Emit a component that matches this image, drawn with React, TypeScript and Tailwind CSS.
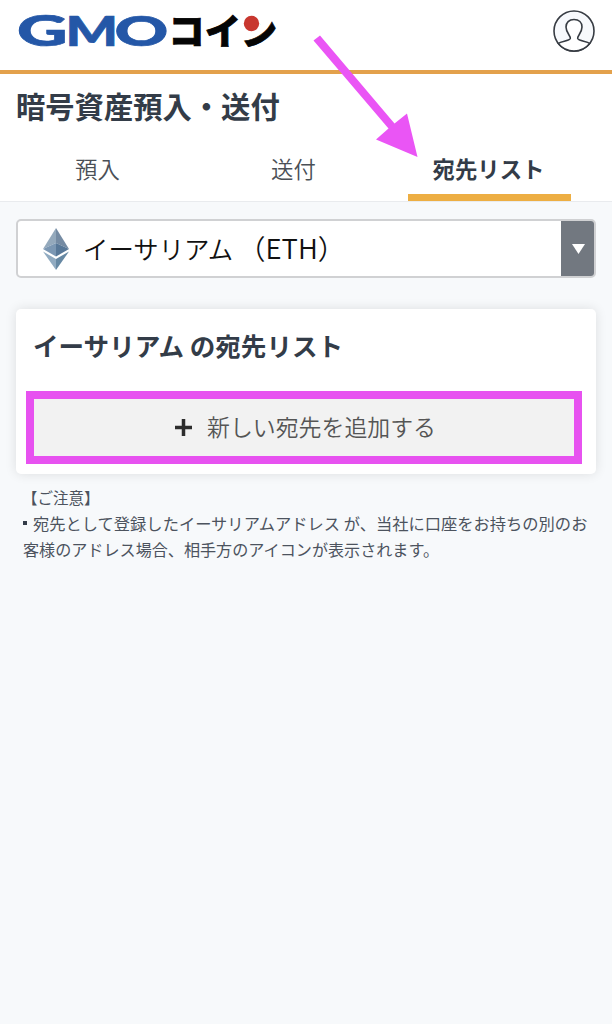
const tabs = [
  { label: "預入", active: false },
  { label: "送付", active: false },
  { label: "宛先リスト", active: true },
];

function Logo() {
  return (
    <svg className="h-[70px] w-[300px]" viewBox="0 0 300 70">
      <g fill="#2457a7" stroke="#2457a7" strokeWidth="0.700" fontSize="41.500" fontWeight="900" fontFamily="Lato, sans-serif">
        <text transform="translate(17 46.300) scale(1.68 1)">G</text>
        <text transform="translate(65.500 46.300) scale(1.33 1)">M</text>
        <text transform="translate(114.500 46.300) scale(1.6 1)">O</text>
      </g>
      <g fill="#050505" stroke="#050505" strokeWidth="0.800" fontSize="36" fontWeight="900" fontFamily="'Noto Sans CJK JP', sans-serif">
        <text x="168.500" y="44.500">コ</text>
        <text x="205" y="44.500">イ</text>
        <text x="241" y="44.500">ン</text>
      </g>
      <path d="M241 13h19v15h-3l-5 5h-11z" fill="#fff" />
      <circle cx="251.500" cy="23.500" r="7.700" fill="#c8372f" />
    </svg>
  );
}

function Avatar() {
  return (
    <svg className="mr-[17px] h-[42px] w-[42px]" viewBox="0 0 42 42" fill="none" stroke="#373c43" strokeWidth="1.6">
      <circle cx="21" cy="21" r="20" fill="#f7f9fc" />
      <path fill="#fff" d="M5.300 33.500C8 31.200 16.500 31 17.300 28.500C18 26 13 23 13 17C13 12.500 16 9.500 21 9.500S29 12.500 29 17C29 23 24 26 24.700 28.500C25.500 31 34 31.200 36.700 33.500A20 20 0 0 1 5.300 33.500Z" />
    </svg>
  );
}

function EthIcon() {
  return (
    <svg className="h-[42px] w-[26px]" viewBox="0 0 26 42">
      <path fill="#94a9bc" d="M13 0 0 21l13-6z" />
      <path fill="#758ba3" d="m13 0 13 21-13-6z" />
      <path fill="#7b97b3" d="m0 21 13-6v13.500z" />
      <path fill="#587898" d="m26 21-13-6v13.500z" />
      <path fill="#91abc1" d="m0 23.500 13 7.500v11z" />
      <path fill="#6688a3" d="m26 23.500-13 7.500v11z" />
    </svg>
  );
}

export default function App() {
  return (
    <div className="relative flex min-h-screen w-full flex-col overflow-hidden bg-[#f7f9fb] text-[#333c48]" lang="ja" style={{ fontFamily: "'Noto Sans CJK JP', sans-serif" }}>
      <header className="flex h-[74px] shrink-0 items-start justify-between border-b-[4px] border-[#e3a14c] bg-white">
        <Logo />
        <div className="pt-[10px]"><Avatar /></div>
      </header>

      <section className="h-[128px] shrink-0 border-b border-[#e9ebee] bg-white">
        <h1 className="pl-[16px] pt-[8px] text-[29.300px] leading-[46px] font-bold whitespace-nowrap">暗号資産預入・送付</h1>
        <nav className="mt-[2px] flex h-[71px] justify-between pr-[41px] pl-[16px]">
          {tabs.map((t) => (
            <button
              key={t.label}
              className={
                t.active
                  ? "flex h-[71px] w-[163px] items-start justify-center border-b-[7px] border-[#edae43] pt-[10px] pr-[2px] text-[22.400px] leading-[56px] font-bold"
                  : "flex h-[71px] w-[163px] items-start justify-center pt-[10px] text-[22.400px] leading-[56px] font-[350] text-[#4a4f56]"
              }
            >
              {t.label}
            </button>
          ))}
        </nav>
      </section>

      <main className="px-[16px] pt-[17px]">
        <div className="flex h-[59px] items-stretch overflow-hidden rounded-[5px] border-2 border-[#d0d1d3] bg-white">
          <div className="flex flex-1 items-center pl-[25px] text-[25.400px] text-[#111]">
            <EthIcon />
            <span className="ml-[14px] pb-[2px] font-[350] whitespace-pre">イーサリアム<span className="ml-[5px] text-[27.500px]">（ETH）</span></span>
          </div>
          <div className="-my-px -mr-px flex w-[34px] items-center justify-center bg-[#727880]">
            <svg className="h-[10px] w-[13px]" viewBox="0 0 13 10"><path fill="#fff" d="M0 0h13L6.500 10z" /></svg>
          </div>
        </div>

        <section className="mt-[31px] h-[165px] rounded-[5px] bg-white px-[10px] pt-[16px] shadow-[0_0_12px_rgba(0,0,0,0.11)]">
          <h2 className="ml-[7px] text-[25.550px] leading-[40px] font-bold whitespace-nowrap">イーサリアム の宛先リスト</h2>
          <button className="mt-[26px] flex h-[73px] w-[556px] items-center justify-center border-[8px] border-[#e752f0] bg-[#f2f2f2] pl-[3px] text-[22.900px] text-[#555]">
            <svg className="mr-[15px] h-[17px] w-[17px]" viewBox="0 0 17 17"><path stroke="#2d2d2d" strokeWidth="3.500" d="M8.500 0v17M0 8.500h17" /></svg>
            <span className="pb-[3px] font-[350]">新しい宛先を追加する</span>
          </button>
        </section>

        <div className="mt-[10px] ml-[7px] text-[16.280px] leading-[26px] text-[#4c535e]">
          <p className="-ml-px text-[15.500px]">【ご注意】</p>
          <p className="flex items-center whitespace-nowrap">
            <span className="mr-[6px] h-[4px] w-[4px] bg-[#333c48]" />
            宛先として登録したイーサリアムアドレス が、当社に口座をお持ちの別のお
          </p>
          <p className="text-[16.100px] whitespace-nowrap">客様のアドレス場合、相手方のアイコンが表示されます。</p>
        </div>
      </main>

      <svg className="pointer-events-none absolute top-[34px] left-[312px] h-[126px] w-[108px]" viewBox="312 34 108 126">
        <path fill="#ea55f5" d="M320 35.500 394.500 123.500 407 113.500 417.500 157 376 139.500 388.500 128.500 313.500 40.500Z" />
      </svg>
    </div>
  );
}
